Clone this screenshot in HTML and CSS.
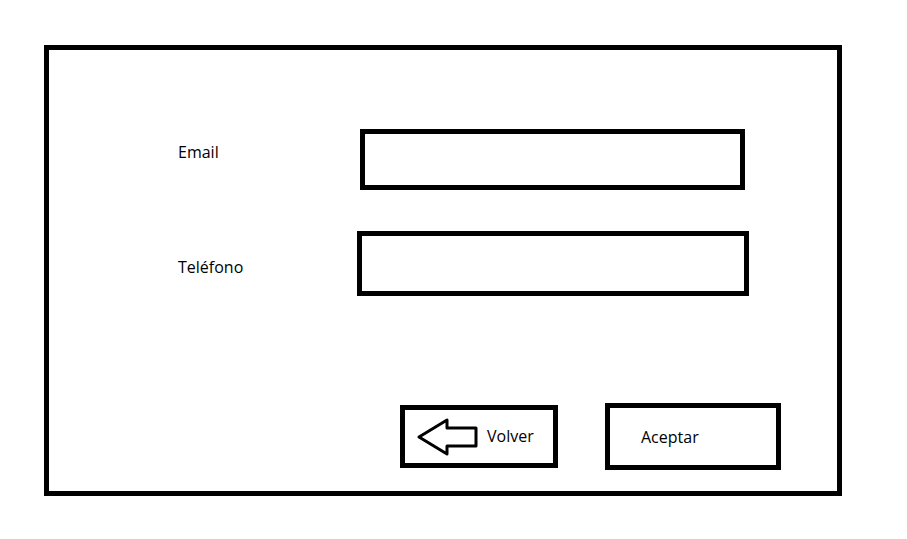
FILE: index.html
```html
<!DOCTYPE html>
<html lang="es">
<head>
<meta charset="UTF-8" />
<meta name="viewport" content="width=device-width, initial-scale=1" />
<title>Datos de contacto</title>
<link rel="stylesheet" href="styles.css">
</head>
<body>

  <!-- Contact form frame -->
  <div class="frame">

    <div class="row row-email">
      <label class="label" for="email">Email</label>
      <input class="field field-email" type="text" id="email" />
    </div>

    <div class="row row-phone">
      <label class="label" for="phone">Teléfono</label>
      <input class="field field-phone" type="text" id="phone" />
    </div>

    <div class="actions">
      <button class="btn btn-back" type="button">
        <svg class="arrow" width="62" height="38" viewBox="0 0 62 38">
          <polygon points="3,19 31,2 31,10 60,10 60,28 31,28 31,36" fill="none" stroke="#000" stroke-width="3" stroke-linejoin="round" />
        </svg>
        <span class="btn-text">Volver</span>
      </button>
      <button class="btn btn-ok" type="button">
        <span>Aceptar</span>
      </button>
    </div>

  </div>

</body>
</html>
```

FILE: styles.css
```css
body {
  margin: 0;
  padding: 45px 0 0 44px;
  background: #fff;
  color: #000;
  font-family: "Open Sans", "Noto Sans", sans-serif;
  font-size: 16px;
  line-height: 20px;
}

/* Outer frame */
.frame {
  box-sizing: border-box;
  width: 798px;
  height: 451px;
  border: 5px solid #000;
  padding-left: 129px;
}

/* Form rows */
.row {
  display: flex;
  align-items: flex-start;
}
.row-email {
  margin-top: 79px;
}
.row-phone {
  margin-top: 41px;
}
.label {
  flex: none;
  width: 182px;
}
.row-email .label {
  margin-top: 13px;
}
.row-phone .label {
  margin-top: 26px;
}
.field {
  box-sizing: border-box;
  border: 5px solid #000;
  border-radius: 0;
  margin: 0;
  padding: 0 8px;
  background: #fff;
  outline: none;
  font: inherit;
}
.field-email {
  width: 385px;
  height: 61px;
}
.field-phone {
  width: 392px;
  height: 65px;
  margin-left: -3px;
}

/* Buttons */
.actions {
  display: flex;
  align-items: center;
  gap: 47px;
  margin-top: 107px;
  padding-left: 222px;
}
.btn {
  box-sizing: border-box;
  display: flex;
  align-items: center;
  border: 5px solid #000;
  border-radius: 0;
  margin: 0;
  background: #fff;
  color: #000;
  font: inherit;
  cursor: pointer;
}
.btn-back {
  width: 158px;
  height: 63px;
  padding: 0 0 0 11px;
}
.btn-back .arrow {
  flex: none;
  display: block;
}
.btn-back .btn-text {
  margin-left: 9px;
  margin-bottom: 1px;
}
.btn-ok {
  width: 176px;
  height: 67px;
  padding: 0 0 0 31px;
}
```
